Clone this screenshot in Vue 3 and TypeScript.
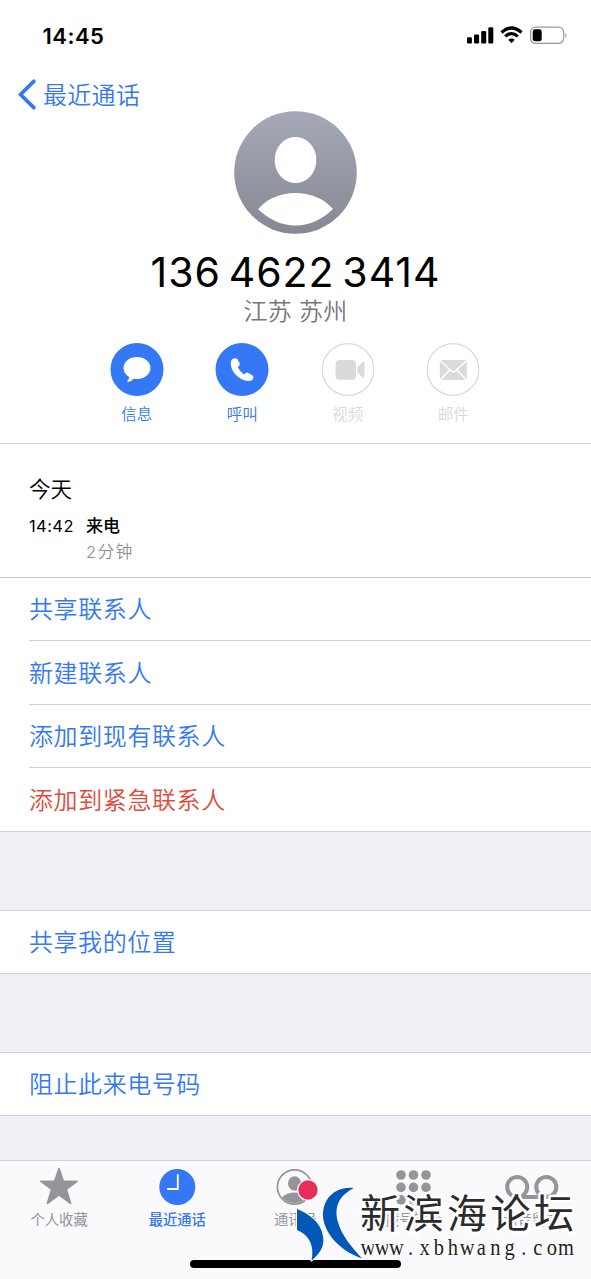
<script setup lang="ts">
interface Action { label: string; icon: 'message' | 'phone' | 'video' | 'mail'; enabled: boolean }
interface Tab { label: string; icon: 'star' | 'clock' | 'contact' | 'keypad' | 'voicemail'; active?: boolean }

const actions: Action[] = [
  { label: '信息', icon: 'message', enabled: true },
  { label: '呼叫', icon: 'phone', enabled: true },
  { label: '视频', icon: 'video', enabled: false },
  { label: '邮件', icon: 'mail', enabled: false },
]
const contactRows = [
  { label: '共享联系人', danger: false },
  { label: '新建联系人', danger: false },
  { label: '添加到现有联系人', danger: false },
  { label: '添加到紧急联系人', danger: true },
]
const tabs: Tab[] = [
  { label: '个人收藏', icon: 'star' },
  { label: '最近通话', icon: 'clock', active: true },
  { label: '通讯录', icon: 'contact' },
  { label: '拨号键盘', icon: 'keypad' },
  { label: '语音留言', icon: 'voicemail' },
]
const keys = Array.from({ length: 9 }, (_, i) => ({ x: 6 + (i % 3) * 12.5, y: 8 + Math.floor(i / 3) * 12.4 }))
const site = 'www.xbhwang.com'
// one cell centre per character gives the address an even pitch
const siteX = Array.from(site, (_, i) => (72 + i * 14.15).toFixed(1)).join(' ')
</script>

<template>
  <div class="phone">
    <header class="status">
      <span class="clock">14:45</span>
      <svg class="indicators" width="104" height="20" viewBox="0 0 104 20">
        <rect x="3" y="11.3" width="4.9" height="6.2" rx="1.2" />
        <rect x="10" y="8.6" width="5.1" height="8.9" rx="1.2" />
        <rect x="17.2" y="5" width="5" height="12.5" rx="1.2" />
        <rect x="24.3" y="1.2" width="5" height="16.3" rx="1.2" />
        <path d="M37.5 6.4Q47.5-2.4 57.5 6.4" fill="none" stroke="#000" stroke-width="3.3" />
        <path d="M41.2 10.4Q47.5 4.9 53.8 10.4" fill="none" stroke="#000" stroke-width="3.2" />
        <path d="M44.2 13.8Q47.5 11 50.8 13.8L47.5 17.3Z" />
        <rect x="66.6" y="1.2" width="33" height="16.2" rx="4.8" fill="none" stroke="#999" stroke-width="1.2" />
        <rect x="68.7" y="3.3" width="9" height="12" rx="2.4" />
        <path d="M101.3 6.4Q103.8 9.3 101.3 12.2Z" fill="#999" />
      </svg>
    </header>
    <nav class="back">
      <svg width="20" height="32" viewBox="0 0 20 32"><path d="M16.8 2.3 3.5 15.5l13.3 13.2" fill="none" stroke="#3478f6" stroke-width="3.8" stroke-linecap="round" stroke-linejoin="round" /></svg>
      <span>最近通话</span>
    </nav>

    <section class="card">
      <svg class="avatar" width="123" height="123" viewBox="0 0 123 123">
        <defs>
          <linearGradient id="avatarFill" x1="0" y1="0" x2="0" y2="1">
            <stop offset="0" stop-color="#a5a9b7" /><stop offset="1" stop-color="#858993" />
          </linearGradient>
        </defs>
        <circle cx="61.5" cy="61.5" r="61.3" fill="url(#avatarFill)" />
        <path d="M61.5 26C73 26 82.3 36 82.3 49S73 72 61.5 72 40.7 62 40.7 49 50 26 61.5 26Z" fill="#fff" />
        <path d="M24 98C34 87 47 82 61.5 82S89 87 99 98C89 108 76 114.5 61.5 114.5S34 108 24 98Z" fill="#fff" />
      </svg>
      <h1 class="number">136 4622 3414</h1>
      <p class="region">江苏 苏州</p>
      <div class="actions">
        <div v-for="a in actions" :key="a.icon" class="action" :class="{ off: !a.enabled }">
          <span class="disc">
            <svg width="53" height="53" viewBox="0 0 53 53" fill="currentColor">
              <path v-if="a.icon === 'message'" d="M26.5 14C34 14 40 18.8 40 25S34 36 26.5 36Q24.8 36 23.3 35.7Q20.8 38.5 17.3 39Q16.3 39 17 38.1Q18.6 36.4 18.7 34.1C15.2 32 13 28.8 13 25 13 18.8 19 14 26.5 14Z" />
              <path v-else-if="a.icon === 'phone'" d="M18.2 15.5L20.2 15.2Q21.3 15.1 22 16.2L24.2 20.4Q24.7 21.6 23.8 22.5L22.2 24.1Q23.9 28.4 28.5 31.4L30.6 29.8Q31.5 29.2 32.7 29.8L37 32.5Q38 33.2 37.9 34.5Q37.6 38 32.8 38C24.5 37.9 15.1 29 15.3 20.3Q15.3 16.3 18.2 15.5Z" />
              <template v-else-if="a.icon === 'video'">
                <rect x="14" y="17" width="20.5" height="19.7" rx="3.8" />
                <path d="M36 24L40.7 19.6Q43 17.8 43 20.4V33.2Q43 36 40.7 34L36 29.8Z" />
              </template>
              <template v-else>
                <rect x="13.3" y="17" width="27" height="20" rx="1.2" />
                <path d="M12.3 16.5L24.8 28Q26.8 29.8 28.8 28L41.3 16.5M13.3 37.5L23.1 27M40.3 37.5L30.5 27" fill="none" stroke="#fff" stroke-width="1.6" />
              </template>
            </svg>
          </span>
          <span class="caption">{{ a.label }}</span>
        </div>
      </div>
    </section>

    <section class="history">
      <h2>今天</h2>
      <div class="call"><span class="time">14:42</span><b>来电</b></div>
      <p>2分钟</p>
    </section>

    <ul class="rows">
      <li v-for="r in contactRows" :key="r.label" :class="{ danger: r.danger }">{{ r.label }}</li>
    </ul>
    <div class="single">共享我的位置</div>
    <div class="single">阻止此来电号码</div>

    <footer class="tabs">
      <div v-for="t in tabs" :key="t.icon" class="tab" :class="{ active: t.active }">
        <svg :width="t.icon === 'voicemail' ? 54 : 38" height="38" :viewBox="t.icon === 'voicemail' ? '0 0 54 38' : '0 0 38 38'" fill="currentColor">
          <path v-if="t.icon === 'star'" d="M19 1.8L23.3 14.3H37L26.2 22.2L30.5 36.2L19 27.8L7.5 36.2L11.8 22.2L1 14.3H14.7Z" stroke="currentColor" stroke-width="1.8" stroke-linejoin="round" />
          <template v-else-if="t.icon === 'clock'">
            <circle cx="19.3" cy="20" r="18" />
            <path d="M19.8 8V22H9.8" fill="none" stroke="#fff" stroke-width="1.8" stroke-linecap="round" />
          </template>
          <template v-else-if="t.icon === 'contact'">
            <circle cx="18.6" cy="20" r="17.2" fill="none" stroke="currentColor" stroke-width="1.7" />
            <ellipse cx="18.6" cy="16.5" rx="6.6" ry="7.2" />
            <path d="M6.1 30.5Q10.6 25.5 18.6 25.5T31.1 30.5Q26.1 36 18.6 36T6.1 30.5Z" />
          </template>
          <template v-else-if="t.icon === 'keypad'">
            <circle v-for="(k, i) in keys" :key="i" :cx="k.x" :cy="k.y" r="4.8" />
          </template>
          <g v-else fill="none" stroke="currentColor" stroke-width="4"><circle cx="12.2" cy="20" r="10" /><circle cx="41.3" cy="20" r="10" /><path d="M12 30H42" /></g>
        </svg>
        <span>{{ t.label }}</span>
      </div>
    </footer>
    <div class="home" />

    <svg class="watermark" width="295" height="119" viewBox="0 0 295 119">
      <g stroke="#fff" stroke-width="2.2" paint-order="stroke" stroke-linejoin="round">
        <circle cx="12" cy="30" r="9.7" fill="#e72e59" />
        <path d="M1 49C13 54 27 63 27.4 80C27.5 89 22 95 15.5 100.5C18.5 87 14 75 1 70Z" fill="#0058b8" />
        <path d="M58 28C40 26 26 38 27 57C29 75 45 91 66 98.5C57 88 46 77 42 62C38 48 42 36 58 28Z" fill="#0058b8" />
        <text class="site" x="64" y="67.5" textLength="214">新滨海论坛</text>
        <text class="url" :x="siteX" y="0" transform="translate(0 94.5) scale(1 1.12)">{{ site }}</text>
      </g>
    </svg>
  </div>
</template>

<style>
body { margin: 0; overflow: hidden; }
</style>
<style scoped>
.phone { position: relative; width: 591px; height: 1279px; overflow: hidden; background: #f0f0f6; color: #000; font-family: Inter, "Noto Sans CJK SC", sans-serif; box-sizing: border-box; }
.phone * { box-sizing: border-box; }
h1, h2, p, ul { margin: 0; padding: 0; font-weight: 400; }
.status { height: 72px; background: #fff; display: flex; justify-content: space-between; padding: 26px 23.5px 0 42.5px; }
.clock { font-size: 22px; line-height: 20px; font-weight: 600; letter-spacing: .5px; }
.back { height: 39px; background: #fff; display: flex; align-items: flex-start; padding: 7px 0 0 17px; color: #3478f6; font-size: 24px; line-height: 33px; letter-spacing: .3px; gap: 6px; font-weight: 350; }
.card { height: 333px; background: #fff; border-bottom: 1px solid #cfcfd2; display: flex; flex-direction: column; align-items: center; }
.avatar { flex: none; }
.number { font-size: 41px; line-height: 50px; margin-top: 13px; letter-spacing: 1px; word-spacing: -4.8px; white-space: nowrap; }
.region { font-size: 24px; line-height: 28px; margin-top: 1px; color: #77777b; font-weight: 350; letter-spacing: .3px; }
.actions { display: flex; width: 422px; margin: 17px 0 0; transform: translateX(-.5px); }
.action { flex: 1; display: flex; flex-direction: column; align-items: center; color: #3478f6; }
.disc { width: 53px; height: 53px; border-radius: 50%; background: #3478f6; color: #fff; display: flex; }
.off { color: #d9d9dc; }
.off .disc { background: #fff; color: #dadadd; box-shadow: inset 0 0 0 1.3px #dadadd; }
.caption { font-size: 15.5px; line-height: 20px; margin-top: 9px; font-weight: 350; }
.history { height: 133px; background: #fff; padding: 30px 29px 0; }
.history h2 { font-size: 21.5px; line-height: 30px; font-weight: 350; }
.call { display: flex; font-size: 16.5px; line-height: 24px; margin-top: 10px; }
.time { width: 57px; letter-spacing: .4px; }
.call b { font-weight: 500; font-size: 17px; }
.history p { color: #8e8e93; font-size: 16.5px; line-height: 24px; margin: 2px 0 0 57px; font-weight: 350; letter-spacing: 1.6px; }
.rows { list-style: none; background: #fff; border-top: 1px solid #c6c6ca; border-bottom: 1px solid #d1d1d5; padding-left: 29px; height: 255px; display: grid; grid-template-rows: 63px 64px 63px 63px; }
.rows li { color: #3478f6; border-bottom: 1px solid #d1d1d5; font-size: 24px; height: 100%; line-height: 63px; letter-spacing: .6px; font-weight: 350; }
.rows li:nth-child(even) { line-height: 65px; }
.rows li:last-child { border-bottom: 0; }
.rows li.danger { color: #e04b3c; }
.single { margin-top: 78px; height: 64px; background: #fff; border: solid #d1d1d5; border-width: 1px 0; padding-left: 29px; color: #3478f6; font-size: 24px; line-height: 63px; letter-spacing: .55px; font-weight: 350; }
.tabs { margin-top: 44px; height: 120px; background: #fafafc; border-top: 1px solid #d0d0d6; padding-top: 6px; display: grid; grid-template-columns: repeat(5, 118.2px); }
.tab { display: flex; flex-direction: column; align-items: center; color: #959599; }
.tab span { font-size: 14.3px; line-height: 20px; margin-top: 5px; }
.tab.active { color: #3478f6; }
.tab.active span { font-weight: 500; }
.home { position: absolute; left: 190px; top: 1260px; width: 211px; height: 8px; border-radius: 4px; background: #000; }
.watermark { position: absolute; left: 296px; top: 1160px; }
.site { font: 400 40px "Noto Sans CJK SC", sans-serif; fill: #2b2b2b; stroke-width: 5px; }
.url { font: 400 20.5px "Liberation Serif", serif; fill: #222; text-anchor: middle; }
</style>
